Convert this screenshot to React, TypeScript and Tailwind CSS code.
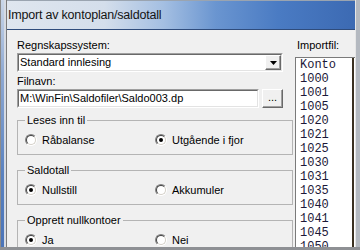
import type { ReactNode } from 'react';

const listRows = ['Konto', '1000', '1001', '1005', '1020', '1021', '1025', '1030', '1031', '1035', '1040', '1041', '1045', '1050'];

function Radio({ checked, label }: { checked?: boolean; label: string }) {
	return (
		<div className="flex w-[130px] items-center gap-[5px]">
			<span className="flex size-[12px] shrink-0 items-center justify-center rounded-full border border-t-[#808080] border-l-[#808080] border-r-white border-b-white">
				<span className="flex size-[10px] items-center justify-center rounded-full border border-t-[#404040] border-l-[#404040] border-r-[#d4d0c8] border-b-[#d4d0c8] bg-white">
					{checked && <span className="size-[4px] rounded-full bg-black" />}
				</span>
			</span>
			<span>{label}</span>
		</div>
	);
}

function Group({ title, children }: { title: string; children: ReactNode }) {
	return (
		<fieldset className="border border-[#b4b4b4] px-[7px] pt-[6px] pb-[7px]">
			<legend className="px-[2px] leading-[13px]">{title}</legend>
			<div className="flex h-[14px] items-center">{children}</div>
		</fieldset>
	);
}

const sunken = 'border border-t-[#a0a0a0] border-l-[#a0a0a0] border-r-white border-b-white';
const sunkenInner = 'border border-t-[#696969] border-l-[#696969] border-r-[#e3e3e3] border-b-[#e3e3e3]';
const raised = 'border border-t-white border-l-white border-r-[#696969] border-b-[#696969] shadow-[inset_-1px_-1px_0_#a0a0a0] bg-[#f0f0f0]';

export default function App() {
	return (
		<div className="flex h-[250px] w-[360px] flex-col overflow-hidden bg-[#f0f0f0] font-['Liberation_Sans',Arial,sans-serif] text-[11px] text-black">
			<div className="flex min-h-0 flex-1">
				{/* left frame */}
				<div className="flex w-[7px] shrink-0 border-l border-r border-l-[#8c8c8c] border-r-[#7a7a7a]">
					<div className="w-[3px] bg-[linear-gradient(to_bottom,#c9d6e8_0%,#8fa9d2_30%,#5a82c0_70%,#4a74b8_100%)]" />
					<div className="flex-1 bg-[#d6dbe3]" />
				</div>

				<div className="flex min-w-0 flex-1 flex-col">
					{/* title bar */}
					<div className="flex h-[30px] shrink-0 items-center border-t border-b border-t-[#9aa4b0] border-b-[#2f4c7c] bg-[linear-gradient(to_right,#dfe6ef_0%,#d4deeb_28%,#a4bfe2_45%,#6a95d0_60%,#4a7bc3_78%,#3c6ab3_100%)] pl-[1px] text-[12.5px] tracking-[-0.2px] text-[#141414]">
						Import av kontoplan/saldotall
					</div>

					{/* client */}
					<div className="flex min-h-0 flex-1 gap-[12px] overflow-hidden pt-[9px] pl-[10px]">
						<div className="flex w-[266px] shrink-0 flex-col">
							<div className="leading-[13px]">Regnskapssystem:</div>
							<div className={`mt-[1px] flex h-[19px] ${sunken}`}>
								<div className={`flex flex-1 items-center bg-white pl-[1px] ${sunkenInner}`}>
									<span className="flex-1">Standard innlesing</span>
									<span className={`flex h-[15px] w-[16px] items-center justify-center ${raised}`}>
										<svg width="7" height="4" viewBox="0 0 7 4">
											<path d="M0 0h7L3.5 4z" fill="#000" />
										</svg>
									</span>
								</div>
							</div>

							<div className="mt-[3px] leading-[13px]">Filnavn:</div>
							<div className="mt-[1px] flex h-[19px] gap-[3px]">
								<div className={`flex w-[242px] ${sunken}`}>
									<div className={`flex flex-1 items-center overflow-hidden whitespace-nowrap bg-white pl-[1px] ${sunkenInner}`}>
										M:\WinFin\Saldofiler\Saldo003.dp
									</div>
								</div>
								<div className={`flex w-[21px] items-center justify-center pb-[2px] ${raised}`}>...</div>
							</div>

							<div className="mt-[6px]">
								<Group title="Leses inn til">
									<Radio label="Råbalanse" />
									<Radio checked label="Utgående i fjor" />
								</Group>
							</div>
							<div className="mt-[9px]">
								<Group title="Saldotall">
									<Radio checked label="Nullstill" />
									<Radio label="Akkumuler" />
								</Group>
							</div>
							<div className="mt-[9px]">
								<Group title="Opprett nullkontoer">
									<Radio checked label="Ja" />
									<Radio label="Nei" />
								</Group>
							</div>
						</div>

						<div className="flex min-w-0 flex-1 flex-col pl-[2px]">
							<div className="leading-[13px]">Importfil:</div>
							<div className="mt-[5px] -ml-[2px] flex-1 border-t border-l border-[#7a7a7a] bg-white pl-[4px] font-['Liberation_Mono','Courier_New',monospace] text-[12px] leading-[14px] text-[#1c1838]">
								{listRows.map((r) => (
									<div key={r} className="flex">
										<span className="w-[52px]">{r}</span>
										<span className="w-[2px] bg-[#3a3020]" />
									</div>
								))}
							</div>
						</div>
					</div>
				</div>

				{/* right frame */}
				<div className="w-[5px] shrink-0 border-l border-l-[#e6e6e6] bg-[#b4b9c0]" />
			</div>
			<div className="h-[3px] shrink-0 bg-[#8e9094]" />
		</div>
	);
}
